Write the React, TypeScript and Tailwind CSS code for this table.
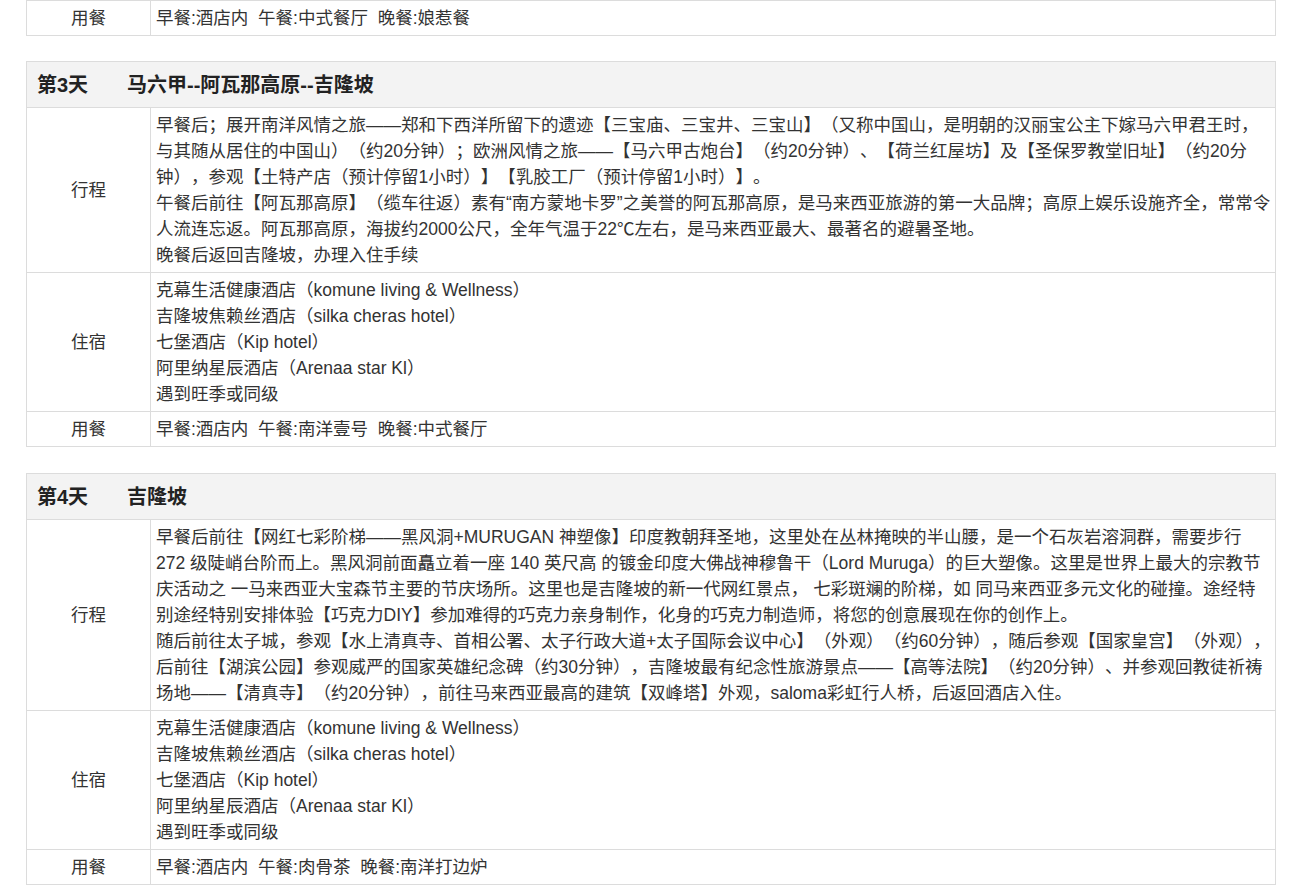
const hotels = [
  "克幕生活健康酒店（komune living & Wellness）",
  "吉隆坡焦赖丝酒店（silka cheras hotel）",
  "七堡酒店（Kip hotel）",
  "阿里纳星辰酒店（Arenaa star Kl）",
  "遇到旺季或同级",
];

type Day = {
  day: string;
  title: string;
  plan: string[];
  meals: string;
};

const days: Day[] = [
  {
    day: "第3天",
    title: "马六甲--阿瓦那高原--吉隆坡",
    plan: [
      "早餐后；展开南洋风情之旅——郑和下西洋所留下的遗迹【三宝庙、三宝井、三宝山】（又称中国山，是明朝的汉丽宝公主下嫁马六甲君王时，",
      "与其随从居住的中国山）（约20分钟）；欧洲风情之旅——【马六甲古炮台】（约20分钟）、【荷兰红屋坊】及【圣保罗教堂旧址】（约20分",
      "钟），参观【土特产店（预计停留1小时）】【乳胶工厂（预计停留1小时）】。",
      "午餐后前往【阿瓦那高原】（缆车往返）素有“南方蒙地卡罗”之美誉的阿瓦那高原，是马来西亚旅游的第一大品牌；高原上娱乐设施齐全，常常令",
      "人流连忘返。阿瓦那高原，海拔约2000公尺，全年气温于22℃左右，是马来西亚最大、最著名的避暑圣地。",
      "晚餐后返回吉隆坡，办理入住手续",
    ],
    meals: "早餐:酒店内\u00a0\u00a0午餐:南洋壹号\u00a0\u00a0晚餐:中式餐厅",
  },
  {
    day: "第4天",
    title: "吉隆坡",
    plan: [
      "早餐后前往【网红七彩阶梯——黑风洞+MURUGAN 神塑像】印度教朝拜圣地，这里处在丛林掩映的半山腰，是一个石灰岩溶洞群，需要步行",
      "272 级陡峭台阶而上。黑风洞前面矗立着一座 140 英尺高 的镀金印度大佛战神穆鲁干（Lord Muruga）的巨大塑像。这里是世界上最大的宗教节",
      "庆活动之 一马来西亚大宝森节主要的节庆场所。这里也是吉隆坡的新一代网红景点， 七彩斑斓的阶梯，如 同马来西亚多元文化的碰撞。途经特",
      "别途经特别安排体验【巧克力DIY】参加难得的巧克力亲身制作，化身的巧克力制造师，将您的创意展现在你的创作上。",
      "随后前往太子城，参观【水上清真寺、首相公署、太子行政大道+太子国际会议中心】（外观）（约60分钟），随后参观【国家皇宫】（外观），",
      "后前往【湖滨公园】参观威严的国家英雄纪念碑（约30分钟），吉隆坡最有纪念性旅游景点——【高等法院】（约20分钟）、并参观回教徒祈祷",
      "场地——【清真寺】（约20分钟），前往马来西亚最高的建筑【双峰塔】外观，saloma彩虹行人桥，后返回酒店入住。",
    ],
    meals: "早餐:酒店内\u00a0\u00a0午餐:肉骨茶\u00a0\u00a0晚餐:南洋打边炉",
  },
];

function Row({ label, lines }: { label: string; lines: string[] }) {
  return (
    <tr>
      <td className="w-[124px] border border-[#dcdcdc] py-1 text-center align-middle">{label}</td>
      <td className="border border-[#dcdcdc] py-1 pl-[5px] pr-1">
        {lines.map((l, i) => (
          <div key={i} className="whitespace-nowrap">
            {l}
          </div>
        ))}
      </td>
    </tr>
  );
}

export default function App() {
  return (
    <div
      className="min-h-screen bg-white pl-[26px] text-[17.5px] leading-[26px] text-[#333] [text-spacing-trim:space-all]"
      style={{ fontFamily: '"Liberation Sans", Arial, "Noto Sans CJK SC", sans-serif' }}
    >
      <table className="mb-[25px] w-[1250px] border-collapse">
        <tbody>
          <Row label="用餐" lines={["早餐:酒店内\u00a0\u00a0午餐:中式餐厅\u00a0\u00a0晚餐:娘惹餐"]} />
        </tbody>
      </table>

      {days.map((d) => (
        <table key={d.day} className="mb-[26px] w-[1250px] border-collapse">
          <tbody>
            <tr>
              <td colSpan={2} className="h-[46px] border border-[#dcdcdc] bg-[#f3f3f3] pl-[10px] text-[20px] font-bold text-[#222]">
                <span className="inline-block w-[90px]">{d.day}</span>
                <span>{d.title}</span>
              </td>
            </tr>
            <Row label="行程" lines={d.plan} />
            <Row label="住宿" lines={hotels} />
            <Row label="用餐" lines={[d.meals]} />
          </tbody>
        </table>
      ))}
    </div>
  );
}
